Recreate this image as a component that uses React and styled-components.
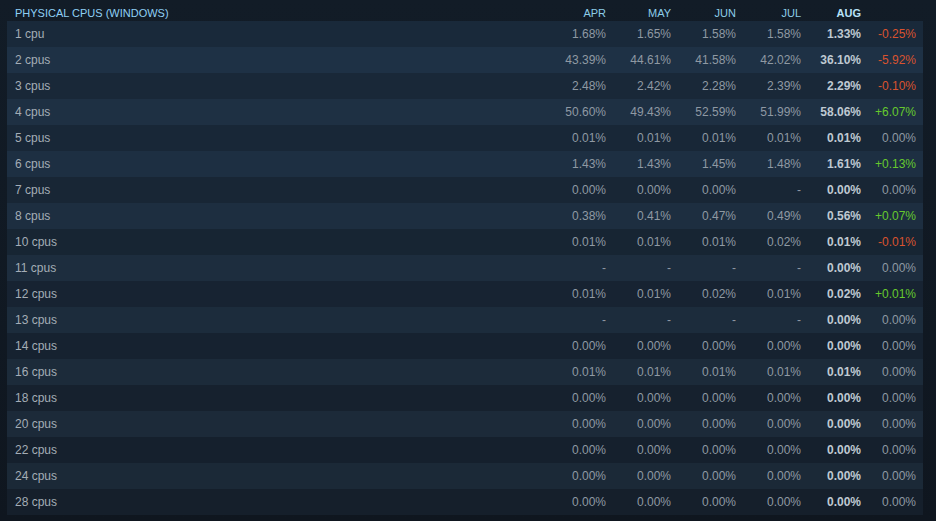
import React from 'react';
import styled, { createGlobalStyle } from "styled-components";

const GlobalStyle = createGlobalStyle`
  body {
    margin: 0;
    background: #101821;
    font-family: Arial, "Liberation Sans", sans-serif;
  }
`

const Page = styled.div`
  width: 936px;
  height: 521px;
  box-sizing: border-box;
  padding: 0 13px 0 7px;
  background: linear-gradient(180deg, #121c27 0%, #0f161f 100%);
  overflow: hidden;
`

const Table = styled.div`
  display: flex;
  flex-direction: column;
`

const grid = `
  display: grid;
  grid-template-columns: 1fr 65px 65px 65px 65px 60px 55px;
  padding: 0 7px 0 8px;
  align-items: center;
`

const HeaderRow = styled.div`
  ${grid};
  height: 21px;
  padding-top: 4px;
  box-sizing: border-box;
`

const Title = styled.div`
  color: #8fd0f5;
  font-size: 11px;
  text-transform: uppercase;
`

const Month = styled.div`
  text-align: right;
  font-size: 11px;
  font-weight: ${({bold}) => bold ? 700 : 400};
  color: ${({bold}) => bold ? '#b8e2f8' : '#8ccde8'};
`

const Rows = styled.div`
  background: linear-gradient(90deg, rgba(40, 70, 100, 0.10) 0%, rgba(0, 0, 0, 0) 40%, rgba(40, 70, 100, 0.08) 70%, rgba(0, 0, 0, 0) 100%);
`

const Row = styled.div`
  ${grid};
  height: 26px;
  background: ${({odd, shade}) => odd
    ? `rgb(${Math.round(27 + shade * 3)}, ${Math.round(40 + shade * 9)}, ${Math.round(54 + shade * 16)})`
    : `rgb(${Math.round(21 + shade * 4)}, ${Math.round(31 + shade * 10)}, ${Math.round(43 + shade * 15)})`};
  font-size: 12px;
`

const Label = styled.div`
  color: #a4adb6;
`

const Cell = styled.div`
  text-align: right;
  color: ${({bold}) => bold ? '#bfc9d2' : '#8f99a3'};
  font-weight: ${({bold}) => bold ? 700 : 400};
`

const Change = styled.div`
  text-align: right;
  color: ${({trend}) => trend === 'up' ? '#66c92e' : trend === 'down' ? '#d9532f' : '#8f99a3'};
`

const months = ["APR", "MAY", "JUN", "JUL", "AUG"];

const data = [
  ["1 cpu", "1.68%", "1.65%", "1.58%", "1.58%", "1.33%", "-0.25%"],
  ["2 cpus", "43.39%", "44.61%", "41.58%", "42.02%", "36.10%", "-5.92%"],
  ["3 cpus", "2.48%", "2.42%", "2.28%", "2.39%", "2.29%", "-0.10%"],
  ["4 cpus", "50.60%", "49.43%", "52.59%", "51.99%", "58.06%", "+6.07%"],
  ["5 cpus", "0.01%", "0.01%", "0.01%", "0.01%", "0.01%", "0.00%"],
  ["6 cpus", "1.43%", "1.43%", "1.45%", "1.48%", "1.61%", "+0.13%"],
  ["7 cpus", "0.00%", "0.00%", "0.00%", "-", "0.00%", "0.00%"],
  ["8 cpus", "0.38%", "0.41%", "0.47%", "0.49%", "0.56%", "+0.07%"],
  ["10 cpus", "0.01%", "0.01%", "0.01%", "0.02%", "0.01%", "-0.01%"],
  ["11 cpus", "-", "-", "-", "-", "0.00%", "0.00%"],
  ["12 cpus", "0.01%", "0.01%", "0.02%", "0.01%", "0.02%", "+0.01%"],
  ["13 cpus", "-", "-", "-", "-", "0.00%", "0.00%"],
  ["14 cpus", "0.00%", "0.00%", "0.00%", "0.00%", "0.00%", "0.00%"],
  ["16 cpus", "0.01%", "0.01%", "0.01%", "0.01%", "0.01%", "0.00%"],
  ["18 cpus", "0.00%", "0.00%", "0.00%", "0.00%", "0.00%", "0.00%"],
  ["20 cpus", "0.00%", "0.00%", "0.00%", "0.00%", "0.00%", "0.00%"],
  ["22 cpus", "0.00%", "0.00%", "0.00%", "0.00%", "0.00%", "0.00%"],
  ["24 cpus", "0.00%", "0.00%", "0.00%", "0.00%", "0.00%", "0.00%"],
  ["28 cpus", "0.00%", "0.00%", "0.00%", "0.00%", "0.00%", "0.00%"],
];

const trendOf = (v) => v.startsWith('+') ? 'up' : v.startsWith('-') && v !== '-' ? 'down' : 'flat';

const App = () => {
    return (
        <Page>
            <GlobalStyle/>
            <Table>
                <HeaderRow>
                    <Title>Physical CPUs (Windows)</Title>
                    {months.map((m, i) => <Month key={m} bold={i === months.length - 1}>{m}</Month>)}
                    <Month/>
                </HeaderRow>
                <Rows>
                    {
                        data.map((row, index) => {
                            const shade = 1 - index / (data.length - 1);
                            const [label, ...values] = row;
                            const change = values.pop();
                            return (
                                <Row key={label} odd={index % 2 === 1} shade={shade}>
                                    <Label>{label}</Label>
                                    {values.map((v, i) => <Cell key={i} bold={i === values.length - 1}>{v}</Cell>)}
                                    <Change trend={trendOf(change)}>{change}</Change>
                                </Row>
                            )
                        })
                    }
                </Rows>
            </Table>
        </Page>
    );
};

export default App;
